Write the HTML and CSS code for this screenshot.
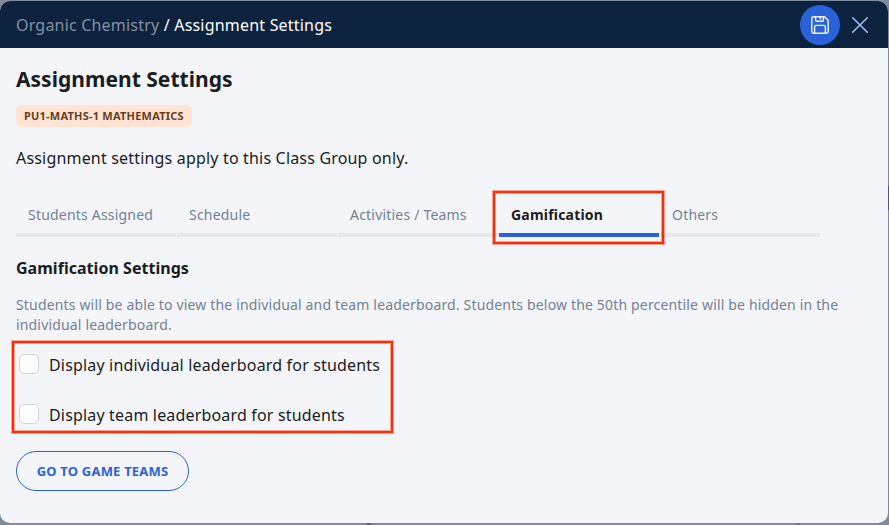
FILE: index.html
```html
<!DOCTYPE html>
<html lang="en">
<head>
<meta charset="utf-8">
<title>Assignment Settings</title>
<link rel="stylesheet" href="styles.css">
</head>
<body>
<div class="dialog">
  <header class="topbar">
    <nav class="breadcrumb"><span class="parent">Organic Chemistry</span> / Assignment Settings</nav>
    <button class="save" aria-label="Save">
      <svg width="20" height="20" viewBox="0 0 20 20" fill="none" stroke="currentColor" stroke-width="1.4" stroke-linejoin="round">
        <path d="M3.2 1.8h11.4l3.6 3.8v11a1.6 1.6 0 0 1-1.6 1.6H3.4a1.6 1.6 0 0 1-1.6-1.6V3.2a1.4 1.4 0 0 1 1.4-1.4z"/>
        <path d="M5.6 2v3.2c0 .7.4 1 1 1h5.8c.6 0 1-.3 1-1V2M10.4 2v2.6"/>
        <path d="M4.6 18v-6.2c0-.9.5-1.4 1.4-1.4h8c.9 0 1.4.5 1.4 1.4V18"/>
      </svg>
    </button>
    <button class="close" aria-label="Close">
      <svg width="18" height="18" viewBox="0 0 18 18" fill="none" stroke="currentColor" stroke-width="1.5" stroke-linecap="round"><path d="M1.7 1.7l14.6 14.6M16.3 1.7L1.7 16.3"/></svg>
    </button>
  </header>
  <main class="content">
    <h1>Assignment Settings</h1>
    <span class="tag">PU1-MATHS-1 MATHEMATICS</span>
    <p class="intro">Assignment settings apply to this Class Group only.</p>
    <div class="tabs">
      <div class="tab">Students Assigned</div>
      <div class="tab">Schedule</div>
      <div class="tab">Activities / Teams</div>
      <div class="tab active">Gamification<span class="highlight tab-highlight"></span></div>
      <div class="tab">Others</div>
    </div>
    <h2>Gamification Settings</h2>
    <p class="description">Students will be able to view the individual and team leaderboard. Students below the 50th percentile will be hidden in the individual leaderboard.</p>
    <div class="options">
      <label class="option"><input type="checkbox"><span class="label">Display individual leaderboard for students</span></label>
      <label class="option"><input type="checkbox"><span class="label">Display team leaderboard for students</span></label>
      <span class="highlight options-highlight"></span>
    </div>
    <button class="teams-button">GO TO GAME TEAMS</button>
  </main>
</div>
</body>
</html>
```
FILE: styles.css
```css
* { box-sizing: border-box; }
body {
  margin: 0;
  height: 525px;
  padding: 1px 1px 2px 0;
  overflow: hidden;
  background:
    linear-gradient(#56637b, #56637b) 367px 523px / 4px 2px no-repeat,
    linear-gradient(#6b7c94, #6b7c94) 796px 523px / 4px 2px no-repeat,
    linear-gradient(#465c7b, #465c7b) 888px 186px / 1px 24px no-repeat,
    #7f8a9b;
  color: #1b1c1e;
  font-family: "Noto Sans", sans-serif;
}
button { padding: 0; border: 0; background: none; font-family: inherit; }
h1, h2, p { margin: 0; }
.dialog { height: 522px; border-radius: 10px; overflow: hidden; background: #f3f5f9; }
.topbar { display: flex; align-items: center; height: 47px; padding: 0 19px 0 16px; background: #0c223f; color: #fff; }
.breadcrumb { margin-right: auto; font-size: 16px; line-height: 24px; letter-spacing: .2px; white-space: nowrap; }
.parent { color: #8591a2; }
.save { display: flex; align-items: center; justify-content: center; width: 40px; height: 40px; margin-top: 1px; border-radius: 50%; background: #2a63d9; color: #f0f4ff; }
.close { display: flex; margin: 1px 0 0 11px; color: #a9c2f5; }
.content { padding: 16px; }
h1 { font-size: 21px; line-height: 30px; font-weight: 700; letter-spacing: .02px; white-space: nowrap; }
.tag { display: block; width: 176px; height: 22px; margin-top: 11px; padding-left: 8px; border-radius: 5px; background: #ffe4d3; color: #693d1c; font-size: 11px; line-height: 22px; font-weight: 700; letter-spacing: .22px; white-space: nowrap; }
.intro { margin-top: 19px; font-size: 16px; line-height: 24px; letter-spacing: .18px; }
.tabs { display: grid; grid-template-columns: repeat(5, 160px); gap: 1px; margin-top: 23px; }
.tab { position: relative; height: 44px; padding-left: 12px; border-bottom: 4px solid #e6e8ec; color: #738195; font-size: 14px; line-height: 43px; letter-spacing: .2px; }
.active { border-color: #2a63d9; color: #1b1c1e; font-weight: 700; }
.highlight { position: absolute; z-index: 1; border: 2px solid #fc2b08; box-shadow: 0 0 0 1px rgba(252, 43, 8, .4), inset 0 0 0 1px rgba(252, 43, 8, .4); pointer-events: none; }
.tab-highlight { left: -6px; top: -2px; width: 171px; height: 53px; }
h2 { margin-top: 20px; font-size: 16px; line-height: 22px; font-weight: 700; letter-spacing: .03px; }
.description { margin-top: 16px; color: #738195; font-size: 14px; line-height: 20px; letter-spacing: .165px; }
.options { position: relative; display: grid; gap: 26px; margin-top: 17px; }
.option { display: flex; align-items: center; gap: 10px; height: 24px; padding-left: 3px; font-size: 16px; line-height: 24px; letter-spacing: .17px; }
.label { padding-top: 2px; }
.option input { appearance: none; width: 20px; height: 20px; margin: 0; border: 1px solid #cfd2dc; border-radius: 5px; background: #fff; }
.options-highlight { left: -4px; top: -11px; width: 381px; height: 92px; }
.teams-button { width: 173px; height: 40px; margin-top: 25px; border: 1px solid #2a63d9; border-radius: 20px; color: #2a63d9; font-size: 13px; font-weight: 700; letter-spacing: .2px; }
```
